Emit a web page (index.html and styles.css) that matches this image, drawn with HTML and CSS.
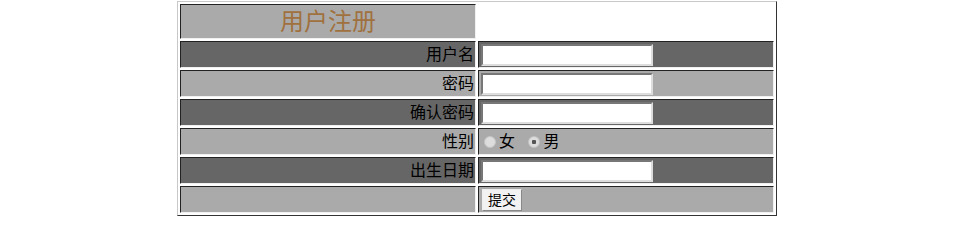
FILE: index.html
```html
<!DOCTYPE html>
<html>
<head>
    <meta charset="UTF-8" />
    <title>用户注册</title>
    <link rel="stylesheet" href="styles.css">
</head>
<body>
<form class="reg">
<table class="regtable">
    <tr class="title">
        <td class="head">用户注册</td>
        <td class="blank"></td>
    </tr>
    <tr class="dark">
        <td class="label">用户名</td>
        <td class="field"><input type="text" class="txt" /></td>
    </tr>
    <tr class="light">
        <td class="label">密码</td>
        <td class="field"><input type="password" class="txt" /></td>
    </tr>
    <tr class="dark">
        <td class="label">确认密码</td>
        <td class="field"><input type="password" class="txt" /></td>
    </tr>
    <tr class="light">
        <td class="label">性别</td>
        <td class="field">
            <label class="opt"><input type="radio" name="sex" class="rad" />女</label>
            <label class="opt"><input type="radio" name="sex" class="rad" checked />男</label>
        </td>
    </tr>
    <tr class="dark">
        <td class="label">出生日期</td>
        <td class="field"><input type="text" class="txt" /></td>
    </tr>
    <tr class="light">
        <td class="label"></td>
        <td class="field"><button type="button" class="btn">提交</button></td>
    </tr>
</table>
</form>
</body>
</html>
```

FILE: styles.css
```css
* {
    font-family : "Liberation Sans", "Noto Sans CJK SC", sans-serif;
    margin : 0px;
    padding : 0px;
}

body { background-color : #fff; }

table.regtable {
    width : 600px;
    margin : 1px 0 0 177px;
    border-collapse : separate;
    border-spacing : 2px;
    border : 1px solid;
    border-color : #c8c8c8 #333 #333 #c8c8c8;
    table-layout : fixed;
}

td {
    width : 50%;
    height : 25px;
    padding : 0 1px;
    border : 1px solid;
    border-color : #222 #f0f0f0 #f0f0f0 #222;
    font-size : 16px;
    line-height : 18px;
    color : #000;
}

tr.title td { height : 33px; }

td.head {
    background-color : #aaa;
    color : #a0713e;
    font-size : 24px;
    line-height : 28px;
    text-align : center;
}

td.blank {
    background-color : #fff;
    border-color : #fff;
}

tr.dark td { background-color : #666; }
tr.light td { background-color : #aaa; }

td.label { text-align : right; }

input.txt {
    display : block;
    width : 172px;
    height : 22px;
    box-sizing : border-box;
    border : 2px solid;
    border-color : #777 #ddd #ddd #777;
    background-color : #fff;
    margin-left : 1px;
}

label.opt {
    display : inline-flex;
    align-items : center;
    vertical-align : middle;
    margin-right : 5px;
}

input.rad {
    -webkit-appearance : none;
    appearance : none;
    width : 12px;
    height : 12px;
    margin : 0 3px 0 4px;
    border-radius : 50%;
    background-color : #ddd;
    border : 1px solid #c4c4c4;
    display : inline-block;
}

input.rad:checked {
    background : radial-gradient(circle, #555 0, #555 2px, #ddd 2.5px);
}

button.btn {
    width : 40px;
    height : 22px;
    margin-left : 2px;
    font-size : 14px;
    line-height : 16px;
    background-color : #f2f2f2;
    border : 1px solid;
    border-color : #eee #888 #888 #eee;
    color : #000;
    display : block;
}
```
